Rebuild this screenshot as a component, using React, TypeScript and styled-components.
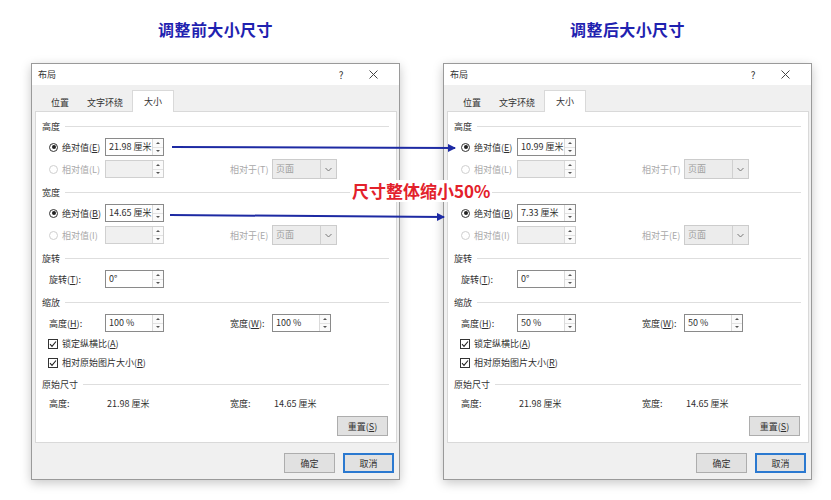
import React from "react";
import styled, { createGlobalStyle } from "styled-components";

const Global = createGlobalStyle`
  html, body { margin: 0; padding: 0; background: #ffffff; }
  body { font-family: "Noto Sans CJK SC", "Noto Sans", sans-serif; }
`;

const Page = styled.div`
  position: relative;
  width: 831px;
  height: 500px;
  overflow: hidden;
  display: flex;
  gap: 43px;
  padding: 17px 0 0 31px;
  box-sizing: border-box;
  background: #fff;
`;

const Column = styled.div`
  width: 369px;
  display: flex;
  flex-direction: column;
  align-items: center;
`;

const Heading = styled.div`
  height: 24px;
  line-height: 24px;
  font-size: 16px;
  font-weight: 700;
  color: #1f22b0;
  letter-spacing: 0.4px;
  margin-bottom: 22px;
`;

const Dialog = styled.div`
  width: 369px;
  box-sizing: border-box;
  border: 1px solid #9a9a9a;
  background: #f0f0f0;
  box-shadow: 0 3px 10px rgba(0, 0, 0, 0.22);
  font-size: 9px;
  color: #2a2a2a;
  display: flex;
  flex-direction: column;
`;

const TitleBar = styled.div`
  height: 21px;
  background: #ffffff;
  display: flex;
  align-items: center;
  padding-left: 6px;
  padding-right: 10px;
`;

const TitleText = styled.div`
  flex: 1;
  font-size: 9px;
  color: #333;
`;

const TitleBtn = styled.div`
  width: 32px;
  display: flex;
  justify-content: center;
  align-items: center;
  font-size: 10px;
  color: #333;
`;

const Body = styled.div`
  padding: 5px 2px 0 3px;
  display: flex;
  flex-direction: column;
`;

const TabStrip = styled.div`
  display: flex;
  height: 21px;
  padding-left: 7px;
  position: relative;
  z-index: 1;
`;

const Tab = styled.div<{ $active?: boolean }>`
  height: ${(p) => (p.$active ? 22 : 19)}px;
  margin-top: ${(p) => (p.$active ? 0 : 2)}px;
  padding: 0 ${(p) => (p.$active ? 11 : 8)}px;
  display: flex;
  align-items: center;
  box-sizing: border-box;
  background: ${(p) => (p.$active ? "#ffffff" : "transparent")};
  border: 1px solid ${(p) => (p.$active ? "#d9d9d9" : "transparent")};
  border-bottom: none;
  color: #333;
`;

const Panel = styled.div`
  background: #ffffff;
  border: 1px solid #d9d9d9;
  padding: 4px 7px 6px 6px;
  display: flex;
  flex-direction: column;
`;

const SectionHeader = styled.div<{ $first?: boolean }>`
  height: 20px;
  margin-top: ${(p) => (p.$first ? 0 : 2)}px;
  display: flex;
  align-items: center;
  gap: 5px;
  color: #333;
  &::after {
    content: "";
    flex: 1;
    height: 1px;
    background: #dedede;
  }
`;

const Row = styled.div<{ $h?: number }>`
  height: ${(p) => p.$h ?? 22}px;
  display: grid;
  grid-template-columns: 56px 59px 66px 42px 65px;
  align-items: center;
  padding-left: 7px;
`;

const Label = styled.span<{ $disabled?: boolean }>`
  color: ${(p) => (p.$disabled ? "#a8a8a8" : "#2f2f2f")};
  white-space: nowrap;
`;

const RadioWrap = styled.span<{ $disabled?: boolean }>`
  color: ${(p) => (p.$disabled ? "#a8a8a8" : "#2f2f2f")};
  white-space: nowrap;
  display: flex;
  align-items: center;
  gap: 4px;
`;

const ValueText = styled.span`
  padding-left: 2px;
  color: #2f2f2f;
  white-space: nowrap;
`;

const RadioCircle = styled.span<{ $checked?: boolean; $disabled?: boolean }>`
  width: 9px;
  height: 9px;
  box-sizing: border-box;
  border-radius: 50%;
  border: 1px solid ${(p) => (p.$disabled ? "#cfcfcf" : "#333")};
  background: #fff;
  display: flex;
  align-items: center;
  justify-content: center;
  &::after {
    content: "";
    width: 4px;
    height: 4px;
    border-radius: 50%;
    background: ${(p) => (p.$checked ? "#222" : "transparent")};
  }
`;

const SpinBox = styled.div<{ $disabled?: boolean }>`
  width: 59px;
  height: 18px;
  box-sizing: border-box;
  border: 1px solid ${(p) => (p.$disabled ? "#d0d0d0" : "#8a8a8a")};
  background: ${(p) => (p.$disabled ? "#f0f0f0" : "#fff")};
  display: flex;
`;

const SpinText = styled.div`
  flex: 1;
  padding: 1px 0 0 3px;
  line-height: 14px;
  color: #2f2f2f;
  white-space: nowrap;
`;

const SpinButtons = styled.div`
  width: 10px;
  display: flex;
  flex-direction: column;
  border-left: 1px solid #dadada;
  background: #fbfbfb;
`;

const SpinHalf = styled.div<{ $down?: boolean }>`
  flex: 1;
  display: flex;
  align-items: center;
  justify-content: center;
  border-top: ${(p) => (p.$down ? "1px solid #e2e2e2" : "none")};
  &::after {
    content: "";
    width: 0;
    height: 0;
    border-left: 2px solid transparent;
    border-right: 2px solid transparent;
    ${(p) =>
      p.$down
        ? "border-top: 2px solid #555;"
        : "border-bottom: 2px solid #555;"}
  }
`;

const Select = styled.div`
  width: 65px;
  height: 20px;
  box-sizing: border-box;
  border: 1px solid #cccccc;
  background: #ececec;
  display: flex;
  color: #a0a0a0;
`;

const SelectText = styled.div`
  flex: 1;
  line-height: 18px;
  padding-left: 3px;
`;

const SelectArrow = styled.div`
  width: 15px;
  border-left: 1px solid #d0d0d0;
  display: flex;
  align-items: center;
  justify-content: center;
`;

const CheckRow = styled.div`
  height: 19px;
  display: flex;
  align-items: center;
  gap: 4px;
  padding-left: 6px;
  color: #2f2f2f;
`;

const CheckBox = styled.span`
  width: 10px;
  height: 10px;
  box-sizing: border-box;
  border: 1px solid #333;
  display: flex;
  align-items: center;
  justify-content: center;
  background: #fff;
`;

const ResetRow = styled.div`
  display: flex;
  justify-content: flex-end;
  margin-top: 4px;
  padding-right: 1px;
`;

const Button = styled.div<{ $primary?: boolean }>`
  width: 51px;
  height: 20px;
  box-sizing: border-box;
  border: ${(p) => (p.$primary ? "2px solid #2b79d0" : "1px solid #adadad")};
  background: #e1e1e1;
  display: flex;
  align-items: center;
  justify-content: center;
  color: #2f2f2f;
`;

const Footer = styled.div`
  display: flex;
  justify-content: flex-end;
  gap: 8px;
  padding: 10px 3px 6px 0;
`;

const Overlay = styled.svg`
  position: absolute;
  left: 0;
  top: 0;
  pointer-events: none;
`;

const Callout = styled.div`
  position: absolute;
  left: 350px;
  top: 180px;
  padding: 0 2px;
  font-size: 17px;
  line-height: 22px;
  font-weight: 700;
  color: #e3212b;
  background: #ffffff;
  white-space: nowrap;
`;

const Spin: React.FC<{ value?: string; disabled?: boolean }> = ({ value, disabled }) => (
  <SpinBox $disabled={disabled}>
    <SpinText>{value}</SpinText>
    <SpinButtons>
      <SpinHalf />
      <SpinHalf $down />
    </SpinButtons>
  </SpinBox>
);

const Radio: React.FC<{ checked?: boolean; disabled?: boolean; children: React.ReactNode }> = ({
  checked,
  disabled,
  children,
}) => (
  <RadioWrap $disabled={disabled}>
    <RadioCircle $checked={checked} $disabled={disabled} />
    <span>{children}</span>
  </RadioWrap>
);

const PageSelect: React.FC = () => (
  <Select>
    <SelectText>页面</SelectText>
    <SelectArrow>
      <svg width="7" height="5" viewBox="0 0 7 5">
        <path d="M0.5 1 L3.5 4 L6.5 1" fill="none" stroke="#777" strokeWidth="1" />
      </svg>
    </SelectArrow>
  </Select>
);

const Check: React.FC<{ children: React.ReactNode }> = ({ children }) => (
  <CheckRow>
    <CheckBox>
      <svg width="8" height="8" viewBox="0 0 8 8">
        <path d="M1 4.2 L3 6.3 L7 1.5" fill="none" stroke="#222" strokeWidth="1.1" />
      </svg>
    </CheckBox>
    <span>{children}</span>
  </CheckRow>
);

type DialogData = {
  height: string;
  width: string;
  scale: string;
  widthCovered?: boolean;
};

const SizeDialog: React.FC<DialogData> = ({ height, width, scale, widthCovered }) => (
  <Dialog>
    <TitleBar>
      <TitleText>布局</TitleText>
      <TitleBtn>?</TitleBtn>
      <TitleBtn>
        <svg width="9" height="9" viewBox="0 0 9 9">
          <path d="M0.5 0.5 L8.5 8.5 M8.5 0.5 L0.5 8.5" stroke="#444" strokeWidth="1" />
        </svg>
      </TitleBtn>
    </TitleBar>
    <Body>
      <TabStrip>
        <Tab>位置</Tab>
        <Tab>文字环绕</Tab>
        <Tab $active>大小</Tab>
      </TabStrip>
      <Panel>
        <SectionHeader $first>高度</SectionHeader>
        <Row>
          <Radio checked>
            绝对值(<u>E</u>)
          </Radio>
          <Spin value={height} />
        </Row>
        <Row>
          <Radio disabled>相对值(L)</Radio>
          <Spin disabled />
          <span />
          <Label $disabled>相对于(T)</Label>
          <PageSelect />
        </Row>
        <SectionHeader>{widthCovered ? null : "宽度"}</SectionHeader>
        <Row>
          <Radio checked>
            绝对值(<u>B</u>)
          </Radio>
          <Spin value={width} />
        </Row>
        <Row>
          <Radio disabled>相对值(I)</Radio>
          <Spin disabled />
          <span />
          <Label $disabled>相对于(E)</Label>
          <PageSelect />
        </Row>
        <SectionHeader>旋转</SectionHeader>
        <Row>
          <Label>
            旋转(<u>T</u>):
          </Label>
          <Spin value="0°" />
        </Row>
        <SectionHeader>缩放</SectionHeader>
        <Row>
          <Label>
            高度(<u>H</u>):
          </Label>
          <Spin value={scale} />
          <span />
          <Label>
            宽度(<u>W</u>):
          </Label>
          <Spin value={scale} />
        </Row>
        <Check>
          锁定纵横比(<u>A</u>)
        </Check>
        <Check>
          相对原始图片大小(<u>R</u>)
        </Check>
        <SectionHeader>原始尺寸</SectionHeader>
        <Row $h={18}>
          <Label>高度:</Label>
          <ValueText>21.98 厘米</ValueText>
          <span />
          <Label>宽度:</Label>
          <ValueText>14.65 厘米</ValueText>
        </Row>
        <ResetRow>
          <Button>
            重置(<u>S</u>)
          </Button>
        </ResetRow>
      </Panel>
      <Footer>
        <Button>确定</Button>
        <Button $primary>取消</Button>
      </Footer>
    </Body>
  </Dialog>
);

export default function App() {
  return (
    <>
      <Global />
      <Page>
        <Column>
          <Heading>调整前大小尺寸</Heading>
          <SizeDialog height="21.98 厘米" width="14.65 厘米" scale="100 %" />
        </Column>
        <Column>
          <Heading>调整后大小尺寸</Heading>
          <SizeDialog height="10.99 厘米" width="7.33 厘米" scale="50 %" widthCovered />
        </Column>
        <Overlay width="831" height="500" viewBox="0 0 831 500">
          <defs>
            <marker id="ah" markerWidth="8" markerHeight="8" refX="7" refY="4" orient="auto" markerUnits="userSpaceOnUse">
              <path d="M0 0 L8 4 L0 8 Z" fill="#1d2aa3" />
            </marker>
          </defs>
          <line x1="172" y1="147" x2="455" y2="148" stroke="#1d2aa3" strokeWidth="2" markerEnd="url(#ah)" />
          <line x1="170" y1="215" x2="444" y2="217" stroke="#1d2aa3" strokeWidth="2" markerEnd="url(#ah)" />
        </Overlay>
        <Callout>尺寸整体缩小50%</Callout>
      </Page>
    </>
  );
}
